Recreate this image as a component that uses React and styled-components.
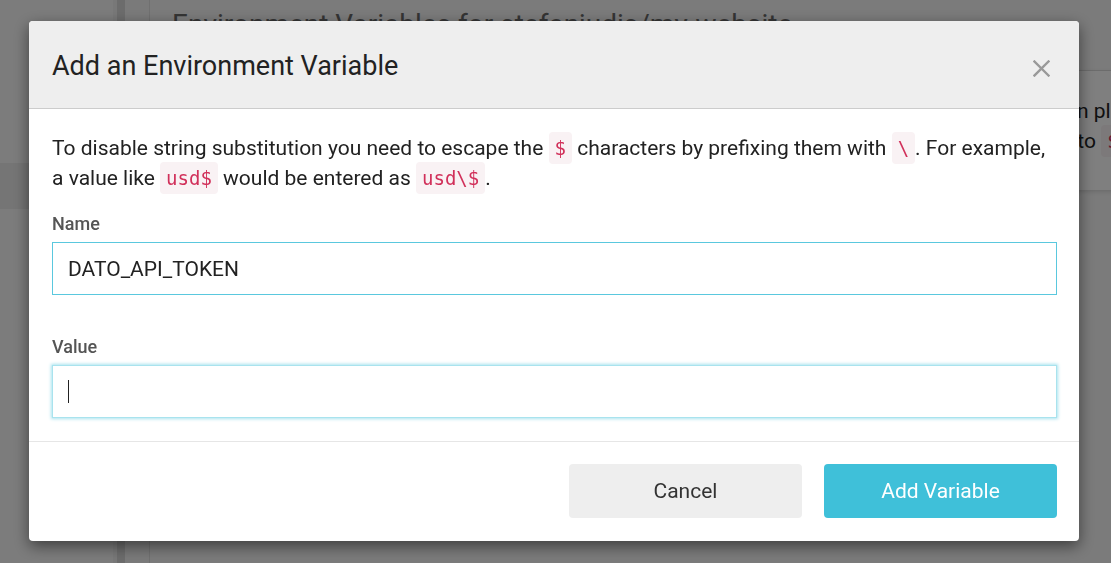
import React from "react";
import styled, { createGlobalStyle } from "styled-components";

const GlobalStyle = createGlobalStyle`
  *, *::before, *::after { box-sizing: border-box; }
  html, body { margin: 0; padding: 0; height: 100%; overflow: hidden; }
  body {
    font-family: Roboto, "Noto Sans", "Liberation Sans", Arial, sans-serif;
    color: #222;
    background: #fff;
  }
`;

/* ---------- page behind the dialog ---------- */
const Page = styled.div`
  display: flex;
  height: 563px;
  width: 100%;
  overflow: hidden;
`;

const Sidebar = styled.nav`
  flex: none;
  width: 113px;
  background: #f9f9f9;
  padding-top: 163px;
`;

const NavItem = styled.div`
  height: 46px;
  background: ${(p) => (p.$active ? "#ebebeb" : "transparent")};
`;

const ScrollTrack = styled.div`
  flex: none;
  width: 12px;
  border-left: 4px solid #f1f1f1;
  background: #d9d9d9;
`;

const Gutter = styled.div`
  flex: none;
  width: 25px;
  background: #f4f4f4;
  border-right: 1px solid #e0e0e0;
`;

const Main = styled.main`
  flex: none;
  width: 1100px;
  background: #f6f6f6;
  padding: 5px 0 0 22px;
`;

const PageTitle = styled.h1`
  margin: 0;
  font-size: 28px;
  font-weight: 400;
  line-height: 40px;
  color: #6a6a6a;
  white-space: nowrap;
`;

const InfoCard = styled.section`
  margin-top: 25px;
  background: #fff;
  border-top: 1px solid #d8d8d8;
  box-shadow: 0 2px 4px rgba(0, 0, 0, 0.12);
  padding: 25px 23px 34px;
  font-size: 21px;
  line-height: 30px;
  white-space: nowrap;
`;

/* ---------- dialog ---------- */
const Backdrop = styled.div`
  position: fixed;
  inset: 0;
  background: rgba(0, 0, 0, 0.5);
  padding: 21px 0 0 29px;
`;

const Dialog = styled.div`
  width: 1050px;
  background: #fff;
  border-radius: 4px;
  box-shadow: 0 5px 15px rgba(0, 0, 0, 0.5);
  overflow: hidden;
`;

const Header = styled.header`
  height: 88px;
  display: flex;
  align-items: center;
  justify-content: space-between;
  padding: 0 29px 0 23px;
  background: #eeeeee;
  border-bottom: 1px solid #cccccc;
`;

const Title = styled.h2`
  margin: 3px 0 0;
  font-size: 27px;
  font-weight: 400;
  color: #222;
`;

const CloseButton = styled.button`
  display: flex;
  width: 17px;
  height: 17px;
  margin-top: 7px;
  padding: 0;
  border: 0;
  background: none;
  cursor: pointer;
`;

const Body = styled.div`
  padding: 24px 22px 23px 23px;
`;

const Intro = styled.p`
  margin: 0 0 19px;
  font-size: 21px;
  line-height: 30px;
  color: #222;
`;

const Code = styled.code`
  font-family: "DejaVu Sans Mono", "Liberation Mono", monospace;
  font-size: 19px;
  line-height: 1;
  padding: 5px 6px;
  border-radius: 4px;
  background: #f9f2f4;
  color: #d1305a;
`;

const Group = styled.div`
  margin-bottom: ${(p) => (p.$last ? "0" : "40px")};
`;

const Label = styled.label`
  display: block;
  margin-bottom: 6px;
  font-size: 18px;
  font-weight: 500;
  line-height: 24px;
  color: #555;
`;

const Field = styled.div`
  height: 53px;
  display: flex;
  align-items: center;
  padding: 0 15px;
  border: 1px solid ${(p) => (p.$focused ? "#a9e3ee" : "#5ac8de")};
  box-shadow: ${(p) =>
    p.$focused ? "0 0 3px 1px rgba(64, 192, 217, 0.45)" : "none"};
  font-size: 21px;
  color: #222;
`;

const Caret = styled.span`
  display: block;
  width: 1px;
  height: 23px;
  background: #222;
`;

const Footer = styled.footer`
  display: flex;
  justify-content: flex-end;
  gap: 22px;
  padding: 22px 22px 23px;
  border-top: 1px solid #e6e6e6;
`;

const Button = styled.button`
  width: 233px;
  height: 54px;
  border: 0;
  border-radius: 4px;
  font-family: Roboto, "Noto Sans", Arial, sans-serif;
  font-size: 21px;
  cursor: pointer;
  background: ${(p) => (p.$primary ? "#3fc0d9" : "#eeeeee")};
  color: ${(p) => (p.$primary ? "#fff" : "#333")};
`;

const CloseIcon = () => (
  <svg width="17" height="17" viewBox="0 0 17 17" fill="none">
    <path
      d="M1.5 1.5 L15.5 15.5 M15.5 1.5 L1.5 15.5"
      stroke="#999"
      strokeWidth="2.4"
      strokeLinecap="square"
    />
  </svg>
);

export default function App() {
  return (
    <>
      <GlobalStyle />
      <Page>
        <Sidebar>
          <NavItem $active />
          <NavItem />
        </Sidebar>
        <ScrollTrack />
        <Gutter />
        <Main>
          <PageTitle>Environment Variables for stefanjudis/my-website</PageTitle>
          <InfoCard>
            {"The variables are made available to your build scripts and functions, and Netlify will substitute in place of"}
            <br />
            {"any references in your configuration file. Any value is read from the environment and expanded to "}
            <Code>$</Code>
            {" VALUE."}
          </InfoCard>
        </Main>
      </Page>

      <Backdrop>
        <Dialog role="dialog" aria-labelledby="env-title">
          <Header>
            <Title id="env-title">Add an Environment Variable</Title>
            <CloseButton aria-label="Close">
              <CloseIcon />
            </CloseButton>
          </Header>
          <Body>
            <Intro>
              To disable string substitution you need to escape the <Code>$</Code> characters by
              prefixing them with <Code>\</Code>. For example,
              <br />
              a value like <Code>usd$</Code> would be entered as <Code>usd\$</Code>.
            </Intro>
            <Group>
              <Label>Name</Label>
              <Field role="textbox">DATO_API_TOKEN</Field>
            </Group>
            <Group $last>
              <Label>Value</Label>
              <Field role="textbox" $focused>
                <Caret />
              </Field>
            </Group>
          </Body>
          <Footer>
            <Button>Cancel</Button>
            <Button $primary>Add Variable</Button>
          </Footer>
        </Dialog>
      </Backdrop>
    </>
  );
}
